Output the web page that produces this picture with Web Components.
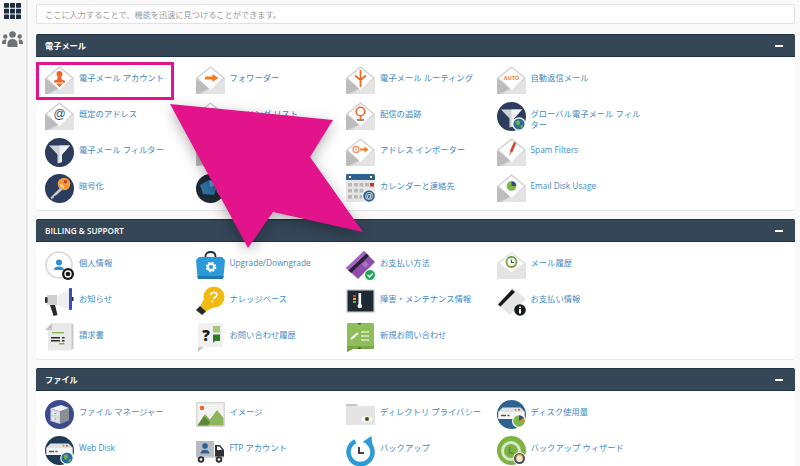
<!DOCTYPE html>
<html lang="ja">
<head>
<meta charset="utf-8">
<title>cPanel</title>
<style>
  html, body { margin: 0; padding: 0; height: 466px; overflow: hidden; background: #f9f9f9; }
  body { font-family: "Open Sans", "Noto Sans CJK JP", sans-serif; }
</style>
</head>
<body>
<cp-page>
  <cp-sidebar slot="side"></cp-sidebar>
  <cp-search placeholder="ここに入力することで、機能を迅速に見つけることができます。"></cp-search>

  <cp-panel title="電子メール" cjk>
    <cp-tool icon="user">電子メール アカウント</cp-tool>
    <cp-tool icon="forward">フォワーダー</cp-tool>
    <cp-tool icon="routing">電子メール ルーティング</cp-tool>
    <cp-tool icon="auto">自動返信メール</cp-tool>
    <cp-tool icon="at">既定のアドレス</cp-tool>
    <cp-tool icon="lists">メーリング リスト</cp-tool>
    <cp-tool icon="track">配信の追跡</cp-tool>
    <cp-tool icon="globalfilter">グローバル電子メール フィルター</cp-tool>
    <cp-tool icon="filter">電子メール フィルター</cp-tool>
    <cp-tool icon="auth">認証</cp-tool>
    <cp-tool icon="importer">アドレス インポーター</cp-tool>
    <cp-tool icon="spam">Spam Filters</cp-tool>
    <cp-tool icon="key">暗号化</cp-tool>
    <cp-tool icon="boxtrapper">BoxTrapper</cp-tool>
    <cp-tool icon="calendar">カレンダーと連絡先</cp-tool>
    <cp-tool icon="maildisk">Email Disk Usage</cp-tool>
  </cp-panel>

  <cp-panel title="BILLING &amp; SUPPORT">
    <cp-tool icon="profile">個人情報</cp-tool>
    <cp-tool icon="bag">Upgrade/Downgrade</cp-tool>
    <cp-tool icon="card">お支払い方法</cp-tool>
    <cp-tool icon="history">メール履歴</cp-tool>
    <cp-tool icon="mega">お知らせ</cp-tool>
    <cp-tool icon="bulb">ナレッジベース</cp-tool>
    <cp-tool icon="status">障害・メンテナンス情報</cp-tool>
    <cp-tool icon="cardinfo">お支払い情報</cp-tool>
    <cp-tool icon="invoice">請求書</cp-tool>
    <cp-tool icon="ticket">お問い合わせ履歴</cp-tool>
    <cp-tool icon="newticket">新規お問い合わせ</cp-tool>
  </cp-panel>

  <cp-panel title="ファイル" cjk>
    <cp-tool icon="files">ファイル マネージャー</cp-tool>
    <cp-tool icon="image">イメージ</cp-tool>
    <cp-tool icon="folder">ディレクトリ プライバシー</cp-tool>
    <cp-tool icon="diskuse">ディスク使用量</cp-tool>
    <cp-tool icon="webdisk">Web Disk</cp-tool>
    <cp-tool icon="ftp">FTP アカウント</cp-tool>
    <cp-tool icon="backup">バックアップ</cp-tool>
    <cp-tool icon="wizard">バックアップ ウィザード</cp-tool>
  </cp-panel>

  <cp-callout slot="over"></cp-callout>
</cp-page>

<script>
const env = (inner) => `
  <path d="M14.500 .3 29 12v15a1 1 0 0 1-1 1H1a1 1 0 0 1-1-1V12Z" fill="#cfcfcf"/>
  <path d="M29 12v15a1 1 0 0 1-1 1H5L20 19Z" fill="#e3e3e3"/>
  <path d="M0 13 14 22 1 28H1a1 1 0 0 1-1-1Z" fill="#bcbcbc"/>
  <path d="M14.500 2 27 12 14.500 24 2 12Z" fill="#fff"/>${inner}`;

const disc = (fill, inner) => `<circle cx="14.500" cy="14.500" r="14.500" fill="${fill}"/>${inner}`;

const globe = `<circle cx="22" cy="22" r="6.800" fill="#fff"/><circle cx="22" cy="22" r="5.600" fill="#2b6d99"/>
  <path d="M18.500 19.500c2-1.600 4-1 4.600.4s-.8 2.800-2 3.400-2.400-1.600-2.600-3.800ZM23.500 23.500l2.600-.8c0 2-1 3.400-2.400 3.800Z" fill="#6fae4a"/>`;

const funnel = `<path d="M4 7.500h21l-8 9v7.500l-4.500 1.500v-9Z" fill="#cfd3d8"/><path d="M14.500 7.500H25l-8 9v7.500l-2.500 .8Z" fill="#eef0f1"/>`;

const server = `<path d="M1.500 11.500 5.500 7.500H23.500l4 4v7.500H1.500Z" fill="#dfe1e4"/><rect x="1.500" y="12" width="26" height="7" fill="#f7f7f7"/><circle cx="22" cy="9.800" r="1" fill="#d8412f"/><circle cx="18.500" cy="9.800" r="1" fill="#7ab648"/><path d="M4 15.500h5M10.500 15.500h2" stroke="#555" stroke-width="1.400"/>`;

const ICONS = {
  user: env(`<circle cx="14.500" cy="8" r="3" fill="#f26522"/><path d="M12.800 10.500h3.400l.6 3 3.200 1.200v1.800H9v-1.800l3.200-1.200ZM11 17.500h7L14.500 21Z" fill="#f26522"/>`),
  forward: env(`<path d="M9 10.500h7.500V8l6 4-6 4v-2.500H9Z" fill="#f47b20"/>`),
  routing: env(`<path d="M14.500 21V4M14.500 14 9 9.500M14.500 14 20 9.500" stroke="#f26522" stroke-width="1.700" fill="none"/>`),
  auto: env(`<text x="14.500" y="13.800" text-anchor="middle" font-family="Open Sans" font-weight="700" font-size="5.500" fill="#f0813a">AUTO</text>`),
  at: env(`<text x="14.500" y="15.500" text-anchor="middle" font-family="Liberation Sans" font-size="12" fill="#2a4f78">@</text>`),
  lists: env(`<path d="M9 7h11M9 11h11M9 15h11" stroke="#999" stroke-width="1.500"/>`),
  track: env(`<circle cx="14.500" cy="9.500" r="4.300" fill="none" stroke="#f26522" stroke-width="1.600"/><path d="M14.500 14v3" stroke="#f26522" stroke-width="1.600"/><path d="M11 18h7" stroke="#8a6a4a" stroke-width="1.600"/>`),
  globalfilter: disc("#2b3c5c", funnel + globe),
  filter: disc("#2b3c5c", funnel),
  auth: env(`<circle cx="14.500" cy="11" r="4" fill="#999"/>`),
  importer: env(`<circle cx="10" cy="11.500" r="3" fill="none" stroke="#ee9268" stroke-width="1.300"/><circle cx="10" cy="11.500" r="1" fill="#ee9268"/><path d="M14 10.500h4.500V8.500l4 3-4 3v-2H14Z" fill="#f47b20"/>`),
  spam: env(`<path d="M17.500 4c1 .2 1.500.8 1.300 2l-3.500 8.500-2.500-1.200 3.700-8.300Z" fill="#d8412f"/><path d="M12.800 13.300l2.500 1.200-3.300 3.500Z" fill="#c9a27a"/>`),
  key: disc("#2b3c5c", `<circle cx="19" cy="10" r="6.300" fill="#f39a3c"/><circle cx="20.500" cy="7.800" r="1.700" fill="#c0392b"/><path d="M15 14 5.500 23.500l1 1.500 2-1 .5-2 2-.5 6-5.500Z" fill="#c9ccd0"/><path d="M15.500 10.500l3 3" stroke="#fff" stroke-width="1.200"/>`),
  boxtrapper: disc("#1d2a33", `<path d="M4 11 13 6l9 4-4 11-11-1Z" fill="#2f6fa5"/><path d="M13 6l9 4-8 3Z" fill="#5ca0d3"/><path d="M21 16l6 9" stroke="#bbb" stroke-width="1.500"/>`),
  calendar: `<rect width="29" height="28" rx="1.500" fill="#e6e6e6"/><path d="M1.500 0h26A1.500 1.500 0 0 1 29 1.500V6H0V1.500A1.500 1.500 0 0 1 1.500 0Z" fill="#2e628f"/>
    <rect x="3" y="2" width="2" height="2" fill="#fff"/><rect x="24" y="2" width="2" height="2" fill="#fff"/>
    <g fill="#b9b9b9"><rect x="2" y="9" width="4" height="3.500"/><rect x="8" y="9" width="4" height="3.500"/><rect x="13.500" y="9" width="4" height="3.500"/><rect x="19" y="9" width="4" height="3.500"/><rect x="2" y="15" width="4" height="3.500"/><rect x="8" y="15" width="4" height="3.500"/><rect x="13.500" y="15" width="4" height="3.500"/><rect x="2" y="21" width="4" height="3.500"/><rect x="8" y="21" width="4" height="3.500"/><rect x="13.500" y="21" width="4" height="3.500"/></g>
    <rect x="24" y="9" width="4" height="3.500" fill="#c0392b"/>
    <circle cx="23" cy="22" r="6.800" fill="#fff"/><circle cx="23" cy="22" r="5.800" fill="#2e628f"/><text x="23" y="25" text-anchor="middle" font-family="Liberation Sans" font-size="8.500" fill="#fff">@</text>`,
  maildisk: env(`<circle cx="14.500" cy="12" r="4.800" fill="#7ab648"/><path d="M14.500 12V7.200a4.800 4.800 0 0 1 4.800 4.800Z" fill="#3a4a8c"/>`),

  profile: `<circle cx="14" cy="14" r="13" fill="#fff" stroke="#d8d8d8" stroke-width="1.700"/><circle cx="14" cy="11.500" r="3" fill="#2b8fd0"/><path d="M9 19c0-2.500 2-3.500 5-3.500s5 1 5 3.500Z" fill="#2b8fd0"/>
    <circle cx="23" cy="23" r="6" fill="#16191c"/><circle cx="23" cy="23" r="3" fill="none" stroke="#fff" stroke-width="1.300"/>`,
  bag: `<path d="M9.500 8V5.500C9.500 2.500 11.500 1 14.500 1s5 1.500 5 4.500V8" fill="none" stroke="#1c2f42" stroke-width="1.800"/><path d="M3 6h23l3 3-1.500 17a2 2 0 0 1-2 2h-22a2 2 0 0 1-2-2L0 9Z" fill="#2a9ad9"/><path d="M1.300 25h26.400l-.2 1a2 2 0 0 1-2 2h-22a2 2 0 0 1-2-2Z" fill="#1f77ad"/><circle cx="15" cy="16" r="3.200" fill="none" stroke="#fff" stroke-width="2.200"/><circle cx="15" cy="16" r="4.700" fill="none" stroke="#fff" stroke-width="1.200" stroke-dasharray="2 1.700"/>`,
  card: `<path d="M18 0 29 11 12 28 0 17Z" fill="#8e4cab"/><path d="M18 0 20.500 2.500 2.500 19.500 0 17Z" fill="#a565c2"/><path d="M2.500 19.500 20.500 2.500 23 5 5 22Z" fill="#262433"/><path d="M19.500 10 23 13.500 19.500 17 16 13.500Z" fill="#a875be"/><circle cx="24" cy="24" r="5.500" fill="#21a65a" stroke="#fff"/><path d="M21.500 24l2 2 3.200-3.500" fill="none" stroke="#fff" stroke-width="1.500"/>`,
  history: `<path d="M14.500 1 29 12v15a1 1 0 0 1-1 1H1a1 1 0 0 1-1-1V12Z" fill="#e4e4e4"/><path d="M14.500 3 26.500 12.500 14.500 21 2.500 12.500Z" fill="#fff"/><circle cx="14.500" cy="11" r="5" fill="#fff" stroke="#6ba43a" stroke-width="1.800"/><path d="M14.500 8.500V11.500H17" fill="none" stroke="#47632c" stroke-width="1.200"/>`,
  mega: `<path d="M12 9 24 2V23L12 18Z" fill="#efefef"/><rect x="2" y="8" width="10" height="10" fill="#cfcfcf"/><rect x="0" y="10" width="2.500" height="6" rx="1" fill="#2a2a2a"/><path d="M5 18h5l2.500 10-4 1Z" fill="#2a2a2a"/><rect x="24" y="1" width="3" height="22" rx=".8" fill="#3a50b8"/><rect x="27" y="10" width="1.500" height="4" fill="#2a2a2a"/>`,
  bulb: `<circle cx="18" cy="10" r="10.500" fill="#f2b90f"/><path d="M10 8 18 20 9.500 24.500 4 19.500Z" fill="#f2b90f"/><path d="M0 23l4-4 6 5.500-4 3.500Z" fill="#26292c"/><path d="M14.500 8c.5-1.800 1.800-2.500 3.400-2.500 1.800 0 3 1 3 2.300 0 2.200-2.800 2-3.200 3.900" fill="none" stroke="#fff" stroke-width="1.700"/><circle cx="16.500" cy="14.500" r="1.100" fill="#fff"/>`,
  status: `<rect width="29" height="24" y="2" rx="1" fill="#d9dcdf"/><rect x="1.500" y="3.500" width="26" height="21" fill="#1f2a35"/><rect x="12.500" y="6" width="2.600" height="12" fill="#fff"/><circle cx="13.800" cy="19" r="2.300" fill="#fff"/><rect x="7" y="8" width="3" height="2" fill="#d8412f"/><rect x="7" y="11" width="3" height="2" fill="#f2b90f"/><rect x="7" y="14" width="3" height="2" fill="#7ab648"/>`,
  cardinfo: `<path d="M16 1 29 12 13 28 0 17Z" fill="#e6e6e6"/><path d="M15 2.500 18 5 3.500 19.500 1 17.500Z" fill="#16191c"/><circle cx="23" cy="23" r="5.800" fill="#16191c"/><rect x="22" y="22" width="2" height="4.500" fill="#fff"/><rect x="22" y="19.500" width="2" height="1.700" fill="#fff"/>`,
  invoice: `<path d="M7 0H27V28l-2-1-2 1-2-1-2 1-2-1-2 1-2-1-2 1-2-1-2 1-2-1-2 1V7Z" fill="#e9e9e9"/><path d="M7 0V7H0Z" fill="#c4c4c4"/><rect x="26.500" y="1" width="2" height="25" fill="#c8c8c8"/><rect x="7" y="9" width="12" height="1.300" fill="#7ab648"/><g fill="#2b2b2b"><rect x="6" y="14" width="9" height="1.500"/><rect x="17" y="14" width="2.500" height="1.500"/><rect x="6" y="17" width="9" height="1.500"/><rect x="17" y="17" width="2.500" height="1.500"/></g><rect x="14" y="20" width="5.500" height="1.500" fill="#7ab648"/>`,
  ticket: `<path d="M3 0H26a1 1 0 0 1 1 1V23a1 1 0 0 1-1 1H3a1 1 0 0 1-1-1V1a1 1 0 0 1 1-1Z" fill="#f0f0f0"/><path d="M2 24H8L2 29Z" fill="#c8c8c8"/><text x="10" y="18" text-anchor="middle" font-family="Open Sans" font-weight="800" font-size="15" fill="#17191b">?</text><rect x="17" y="3" width="7" height="6.500" fill="#a5c77b"/><path d="M17 11.500h7v6.500h-5l-2 2Z" fill="#2d7a28"/>`,
  newticket: `<path d="M3 0H27a1 1 0 0 1 1 1V25a1 1 0 0 1-1 1H7L1 29V1a1 1 0 0 1 1-1Z" fill="#8fbd5a"/><path d="M1 23h27v2a1 1 0 0 1-1 1H7l-6 3Z" fill="#79a748"/><path d="M11 0h5l-2.500 2ZM11 26h5l-2.500-2Z" fill="#3e6b24"/><path d="M5 16l7-6" stroke="#fff" stroke-width="2"/><path d="M15 9h8M15 13h8M15 17h8" stroke="#fff" stroke-width="1.200"/>`,

  files: disc("#3a4a8c", `<path d="M5.500 8.500 16 5l8 3-9 3.500Z" fill="#f0f1f2"/><path d="M5.500 8.500l9.500 3V24l-9.500-3Z" fill="#d5d8dc"/><path d="M15 11.500l9-3.500v12.500L15 24Z" fill="#8b9096"/><path d="M7.500 11.500l5.500 1.700v2.300l-5.500-1.700ZM7.500 17l5.500 1.700V21l-5.500-1.700Z" fill="#f4f5f6"/><path d="M9 13.200l2.500.8M9 18.700l2.500.8" stroke="#777" stroke-width=".8"/>`),
  image: `<rect width="29" height="25" y="2" fill="#d9d9d9"/><rect x="1.500" y="3.500" width="26" height="22" fill="#f2f2f2"/><circle cx="6" cy="8" r="2.200" fill="#f26522"/><path d="M1.500 25.500 9 14l5 5.500 7-9.500 6.500 8v7.500Z" fill="#8cb55c"/><path d="M1.500 25.500 8 16l6 6-2 3.500Z" fill="#5d8a36"/>`,
  folder: `<path d="M0 4h11l1 2h17v19H0Z" fill="#e4e4e4"/><rect width="11" height="2" y="4" fill="#c4c4c4"/><path d="M15 19c3-4 8-4 12 0-4 4-9 4-12 0Z" fill="#fff"/><circle cx="21" cy="19" r="2.300" fill="#5d8a36"/><circle cx="21" cy="19" r="1" fill="#1d2a1a"/>`,
  diskuse: disc("#2e628f", server + `<circle cx="22" cy="21" r="7" fill="#fff"/><circle cx="22" cy="21" r="5.800" fill="#7ab648"/><path d="M22 21v-5.800a5.800 5.800 0 0 1 5 2.900Z" fill="#3a4a8c"/><path d="M22 21l5-2.900a5.800 5.800 0 0 1 .8 2.900Z" fill="#e08a2c"/>`),
  webdisk: disc("#1f3a56", server + globe),
  ftp: `<rect x="0" y="5" width="18" height="16" fill="#b7bcc2"/><circle cx="9" cy="10" r="2.800" fill="#2e628f"/><path d="M4.500 17.500c0-2.500 2-3.800 4.500-3.800s4.500 1.300 4.500 3.800Z" fill="#2e628f"/><path d="M19 9h5l4 5V22H19Z" fill="#2f3338"/><path d="M21 10.500h2.500l2.500 3.500h-5Z" fill="#fff"/><rect y="20.500" width="28" height="1.500" fill="#d4d4d4"/><circle cx="5" cy="23.500" r="3.300" fill="#2f3338"/><circle cx="5" cy="23.500" r="1.300" fill="#fff"/><circle cx="23" cy="23.500" r="3.300" fill="#2f3338"/><circle cx="23" cy="23.500" r="1.300" fill="#fff"/>`,
  backup: `<path d="M21 5.500A12 12 0 1 1 9.500 4.700" fill="none" stroke="#2a9ad9" stroke-width="4.500" transform="translate(0 .5)"/><path d="M25.500 0 26.500 10 16.500 6Z" fill="#2a9ad9"/><path d="M13 11v6h5" fill="none" stroke="#3c4248" stroke-width="2"/>`,
  wizard: disc("#7db343", `<circle cx="14" cy="15" r="8.500" fill="none" stroke="#d9e7c6" stroke-width="3"/><path d="M12.500 11v6h4" fill="none" stroke="#5d8a36" stroke-width="1.500"/><circle cx="22.500" cy="22.500" r="6.500" fill="#fff"/><circle cx="22.500" cy="22.500" r="5.500" fill="#4a4f55"/><circle cx="22.500" cy="22.500" r="3.400" fill="#efe6d2"/><path d="M19 21a3.600 3.600 0 0 1 7 0" fill="none" stroke="#c58a3a"/>`)
};

class CpPage extends HTMLElement {
  constructor() {
    super();
    this.attachShadow({ mode: "open" }).innerHTML = `
      <style>
        :host { display: grid; grid-template-columns: 28px 1fr; height: 466px; position: relative; overflow: hidden; }
        main { padding: 4px 5px 0 8px; display: flex; flex-direction: column; gap: 9px; min-width: 0; }
      </style>
      <slot name="side"></slot>
      <main><slot></slot></main>
      <slot name="over"></slot>`;
  }
}

class CpSidebar extends HTMLElement {
  constructor() {
    super();
    const cells = [0, 1, 2].flatMap((r) => [0, 1, 2].map((c) =>
      `<rect x="${c * 6}" y="${r * 5.700}" width="5" height="4.800" rx=".6"/>`)).join("");
    this.attachShadow({ mode: "open" }).innerHTML = `
      <style>
        :host { display: flex; flex-direction: column; align-items: center; gap: 12px; box-sizing: border-box;
                background: #f6f6f6; border-right: 2px solid #e6e6e6; padding: 3px 2px 0 0; }
        svg { display: block; }
      </style>
      <svg width="17" height="16" viewBox="0 0 17 16" fill="#1c2d42">${cells}</svg>
      <svg width="21" height="16" viewBox="0 0 21 16" fill="#6f7376">
        <circle cx="10.500" cy="3.500" r="3.300"/><path d="M5.500 16v-3.500c0-3 2-4.500 5-4.500s5 1.500 5 4.500V16Z"/>
        <circle cx="3.300" cy="5.500" r="2.200"/><path d="M0 13v-1.500C0 9.500 1.300 8.500 3.300 8.500c.6 0 1 .1 1.300.2-.5 1-.7 2-.7 3.300V13Z"/>
        <circle cx="17.700" cy="5.500" r="2.200"/><path d="M21 13v-1.500c0-2-1.300-3-3.300-3-.6 0-1 .1-1.300.2.500 1 .7 2 .7 3.300V13Z"/>
      </svg>`;
  }
}

class CpSearch extends HTMLElement {
  constructor() {
    super();
    this.attachShadow({ mode: "open" }).innerHTML = `
      <style>
        :host { display: block; margin-bottom: 1px; }
        input { display: block; box-sizing: border-box; width: 100%; height: 20px; padding: 0 8px; margin: 0;
                border: 1px solid #e2e2e2; border-radius: 2px; background: #fff; outline: 0;
                font: 8.200px "Open Sans", "Noto Sans CJK JP", sans-serif; }
        input::placeholder { color: #9b9b9b; opacity: 1; }
      </style>
      <input type="text" placeholder="${this.getAttribute("placeholder")}">`;
  }
}

class CpPanel extends HTMLElement {
  constructor() {
    super();
    this.attachShadow({ mode: "open" }).innerHTML = `
      <style>
        :host { display: block; background: #fff; border-radius: 2px; box-shadow: 0 1px 1px rgba(0,0,0,.08); }
        header { display: flex; align-items: center; justify-content: space-between; height: 23px; box-sizing: border-box;
                 padding: 0 12px 0 9px; background: #354657; color: #fff; border-top: 1px solid #1f3044;
                 border-bottom: 1px solid #1f3044; border-radius: 2px 2px 0 0;
                 font-size: 8.200px; font-weight: 600; }
        :host([cjk]) span { padding-bottom: 2px; }
        i { display: block; width: 8px; height: 2px; background: #fff; }
        .grid { display: grid; grid-template-columns: repeat(4, 150.500px); grid-auto-rows: 36px; padding: 9px 0 0 9px; }
      </style>
      <header><span>${this.getAttribute("title")}</span><i></i></header>
      <div class="grid"><slot></slot></div>`;
  }
}

class CpTool extends HTMLElement {
  constructor() {
    super();
    this.attachShadow({ mode: "open" }).innerHTML = `
      <style>
        :host { display: flex; gap: 5px; align-items: flex-start; min-width: 0; }
        svg { flex: none; display: block; overflow: visible; }
        span { display: block; max-width: 112px; padding-top: 6px; font-size: 8.300px; line-height: 11px; color: #4289c4; }
      </style>
      <svg width="29" height="29" viewBox="0 0 29 29">${ICONS[this.getAttribute("icon")]}</svg>
      <span><slot></slot></span>`;
  }
}

class CpCallout extends HTMLElement {
  constructor() {
    super();
    this.attachShadow({ mode: "open" }).innerHTML = `
      <style>
        :host { display: block; position: absolute; inset: 0; pointer-events: none; }
        .frame { position: absolute; left: 36px; top: 62px; width: 138px; height: 38px; box-sizing: border-box; border: 3px solid #e3148b; }
        svg { position: absolute; left: 0; top: 0; filter: drop-shadow(0 4px 7px rgba(0,0,0,.3)); }
      </style>
      <div class="frame"></div>
      <svg width="800" height="466"><polygon points="170,104 333,120 310,157 363,232 273,212 248,248" fill="#e3148b"/></svg>`;
  }
}

customElements.define("cp-page", CpPage);
customElements.define("cp-sidebar", CpSidebar);
customElements.define("cp-search", CpSearch);
customElements.define("cp-panel", CpPanel);
customElements.define("cp-tool", CpTool);
customElements.define("cp-callout", CpCallout);
</script>
</body>
</html>
